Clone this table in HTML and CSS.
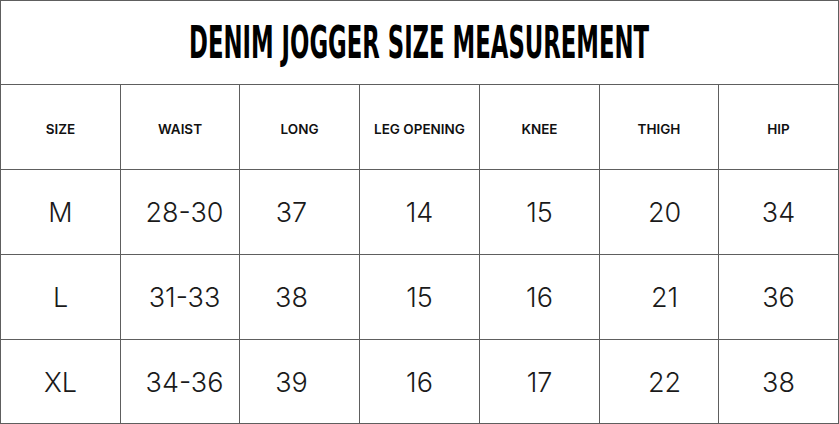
FILE: index.html
```html
<!DOCTYPE html>
<html lang="en">
<head>
<meta charset="utf-8">
<title>Denim Jogger Size Measurement</title>
<link rel="stylesheet" href="styles.css">
</head>
<body>
<div class="chart">
  <div class="title"><h1 class="title-text">DENIM JOGGER SIZE MEASUREMENT</h1></div>
  <div class="cell head">SIZE</div>
  <div class="cell head">WAIST</div>
  <div class="cell head">LONG</div>
  <div class="cell head">LEG OPENING</div>
  <div class="cell head">KNEE</div>
  <div class="cell head">THIGH</div>
  <div class="cell head">HIP</div>

  <div class="cell val">M</div>
  <div class="cell val c-waist">28-30</div>
  <div class="cell val c-long">37</div>
  <div class="cell val">14</div>
  <div class="cell val">15</div>
  <div class="cell val c-thigh">20</div>
  <div class="cell val">34</div>

  <div class="cell val">L</div>
  <div class="cell val c-waist">31-33</div>
  <div class="cell val c-long">38</div>
  <div class="cell val">15</div>
  <div class="cell val">16</div>
  <div class="cell val c-thigh">21</div>
  <div class="cell val">36</div>

  <div class="cell val">XL</div>
  <div class="cell val c-waist">34-36</div>
  <div class="cell val c-long">39</div>
  <div class="cell val">16</div>
  <div class="cell val">17</div>
  <div class="cell val c-thigh">22</div>
  <div class="cell val">38</div>
</div>
</body>
</html>
```
FILE: styles.css
```css
html, body {
  margin: 0;
  padding: 0;
  background: #fff;
}

.chart {
  width: 839px;
  height: 424px;
  box-sizing: border-box;
  display: grid;
  grid-template-columns: 119px 118px 119px 119px 119px 118px 119px;
  grid-template-rows: 83px 84px 84px 84px 83px;
  gap: 1px;
  padding: 1px;
  background: #5e5e5e;
  font-family: "Inter", "Open Sans", sans-serif;
  color: #111;
}

.title {
  grid-column: 1 / -1;
  background: #fff;
  display: flex;
  align-items: center;
  justify-content: center;
}

.title-text {
  margin: 0;
  font-family: "DejaVu Sans Condensed", "Liberation Sans", sans-serif;
  font-weight: 700;
  font-size: 44px;
  line-height: 1;
  color: #000;
  display: inline-block;
  transform: scaleX(0.575);
  white-space: nowrap;
  padding-top: 1px;
}

.cell {
  background: #fff;
  display: flex;
  align-items: center;
  justify-content: center;
}

.head {
  font-size: 13.5px;
  font-weight: 600;
  color: #111;
  padding-top: 4px;
}

.val {
  font-size: 27px;
  font-weight: 300;
  color: #1a1a1a;
  padding-top: 1px;
}

.c-waist {
  padding-left: 9px;
}

.c-long {
  padding-right: 16px;
}

.c-thigh {
  padding-left: 11px;
}
```
